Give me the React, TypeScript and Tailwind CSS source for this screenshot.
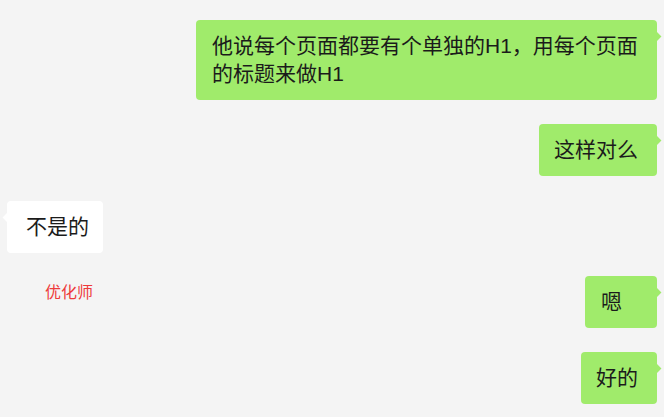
const font = { fontFamily: '"Liberation Sans", "Noto Sans CJK SC", sans-serif' };

type BubbleProps = {
  text: string;
  mine?: boolean;
  className?: string;
};

const Bubble = ({ text, mine = true, className = "" }: BubbleProps) => {
  return (
    <div
      className={`relative rounded-[4px] py-[12px] text-[21px] leading-[28px] text-[#1b1b1b] ${
        mine ? "bg-[#a0eb6b]" : "bg-white"
      } ${className}`}
    >
      <span
        className={`absolute top-[13px] h-[7px] w-[7px] rotate-45 ${
          mine ? "-right-[3px] bg-[#a0eb6b]" : "-left-[3px] bg-white"
        }`}
      />
      <span className="relative">{text}</span>
    </div>
  );
};

export default function App() {
  return (
    <div
      className="flex h-[417px] w-[664px] flex-col gap-6 overflow-hidden bg-[#f4f4f4] px-[7px] pt-5"
      style={font}
    >
      <div className="flex justify-end">
        <Bubble
          text="他说每个页面都要有个单独的H1，用每个页面的标题来做H1"
          className="w-[461px] pl-4 pr-3"
        />
      </div>
      <div className="flex justify-end">
        <Bubble text="这样对么" className="pl-[15px] pr-[19px]" />
      </div>
      <div className="mt-px flex justify-start">
        <Bubble text="不是的" mine={false} className="pl-[19px] pr-[14px]" />
      </div>
      <div className="-mt-px flex items-start justify-between">
        <span className="ml-[38px] mt-[7px] text-[16px] leading-[20px] text-[#ee3b3b]">
          优化师
        </span>
        <Bubble text="嗯" className="min-w-[72px] pl-[16px] pr-[19px]" />
      </div>
      <div className="flex justify-end">
        <Bubble text="好的" className="min-w-[72px] pl-[15px] pr-[19px]" />
      </div>
    </div>
  );
}
